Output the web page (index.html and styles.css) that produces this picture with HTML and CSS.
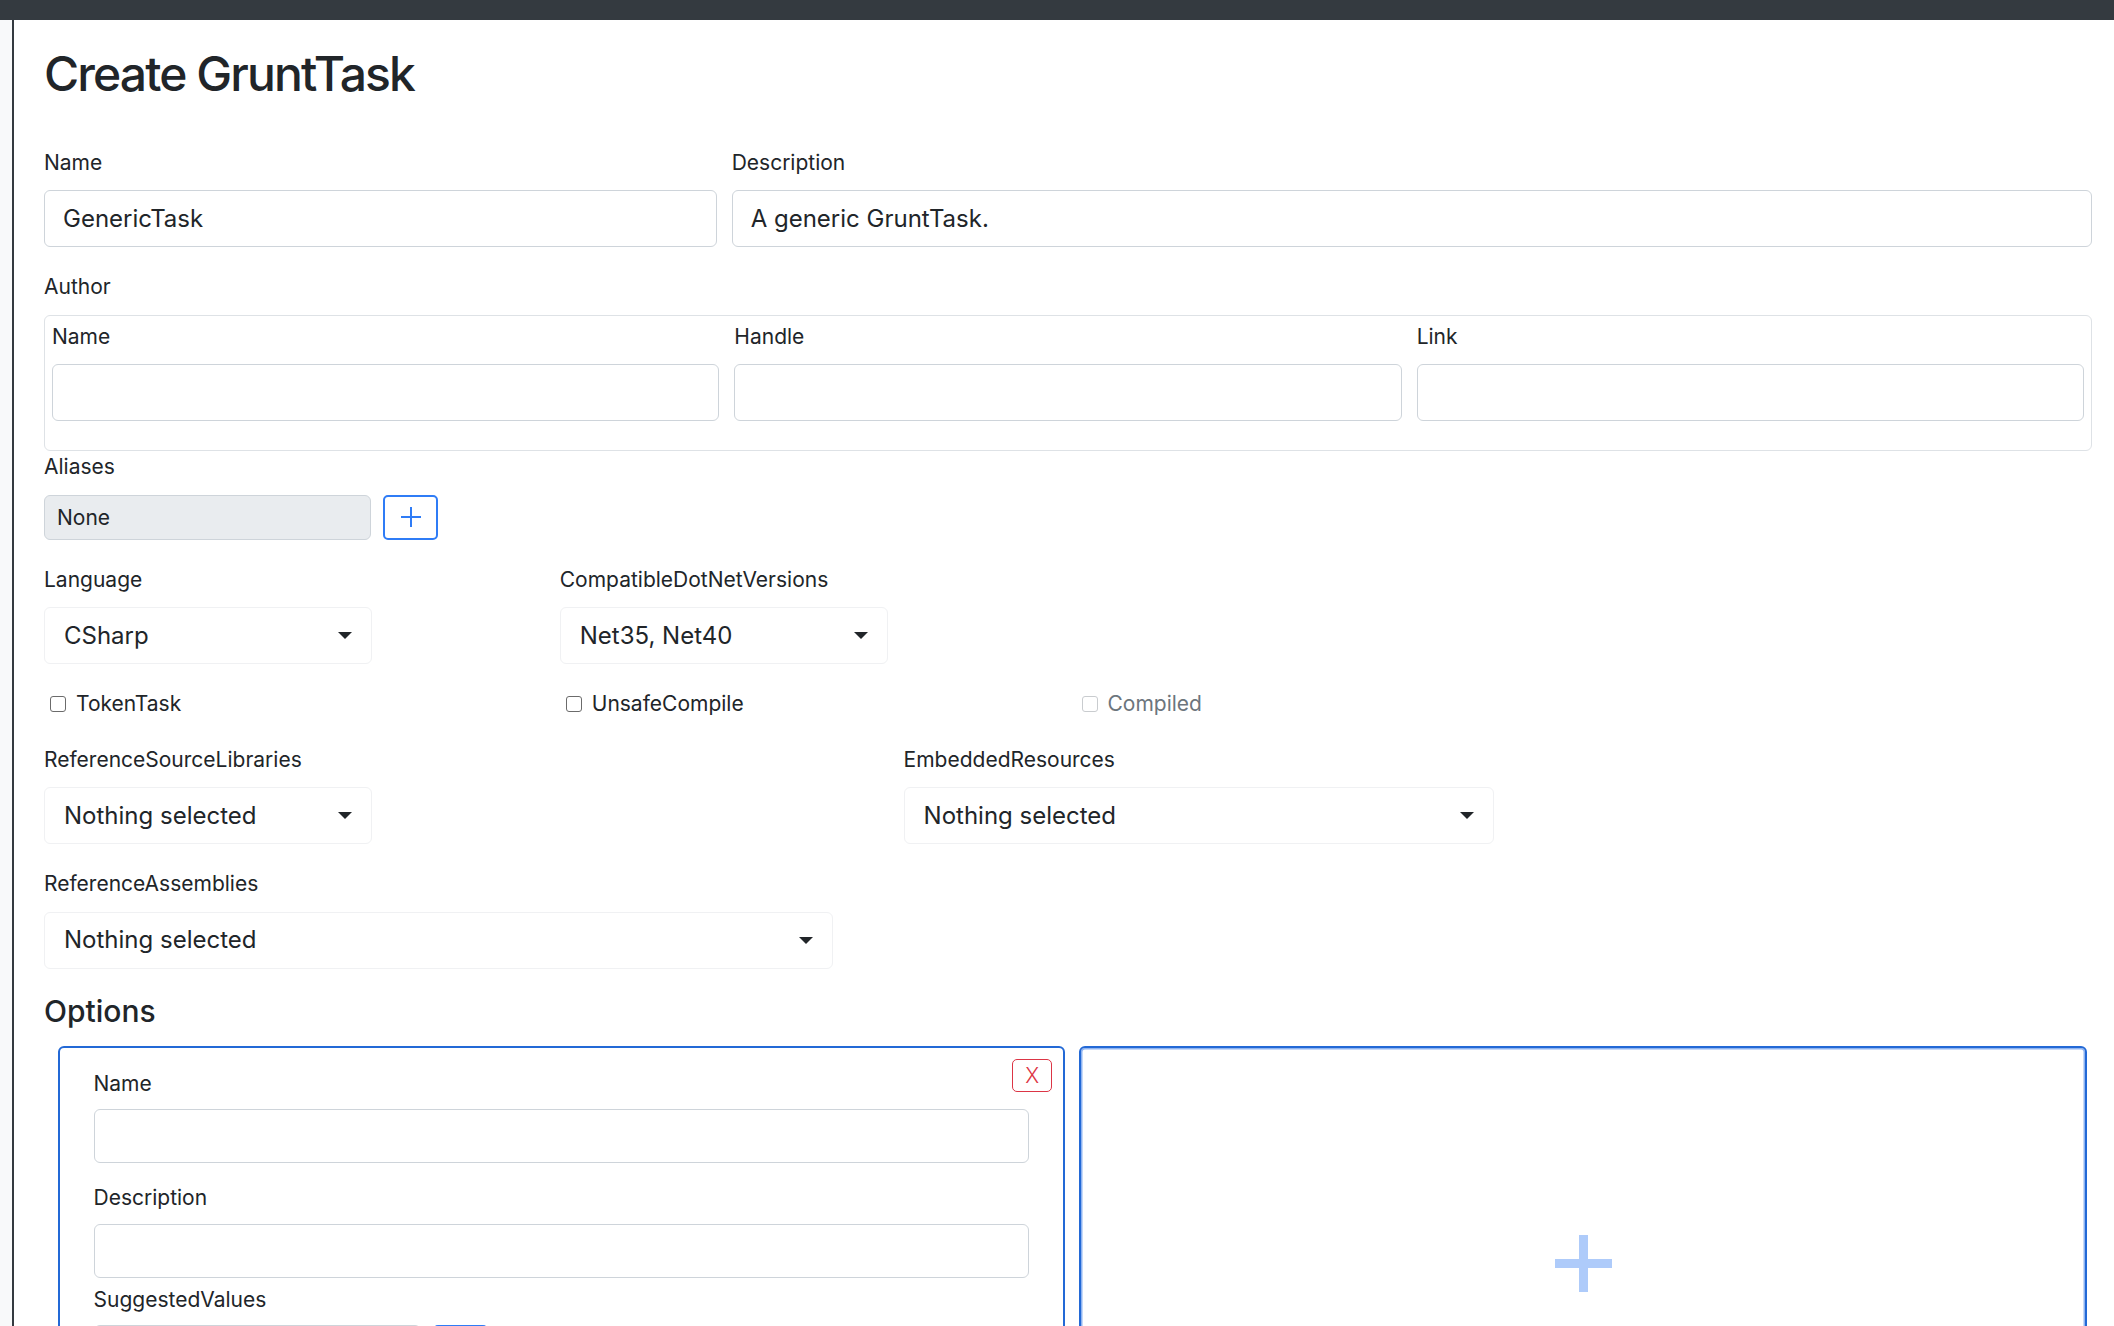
FILE: index.html
```html
<!DOCTYPE html>
<html lang="en">
<head>
	<meta charset="UTF-8">
	<title>Create GruntTask</title>
	<link rel="stylesheet" href="styles.css">
</head>
<body>
	<div class="topbar"></div>
	<div class="layout">
		<aside class="sidebar"></aside>
		<main class="content">
			<h1 class="title">Create GruntTask</h1>
			<form>
				<div class="form-row">
					<div class="form-group col-4">
						<label>Name</label>
						<input class="form-control" type="text" value="GenericTask">
					</div>
					<div class="form-group col-8">
						<label>Description</label>
						<input class="form-control" type="text" value="A generic GruntTask.">
					</div>
				</div>

				<label>Author</label>
				<div class="author">
					<div class="form-row">
						<div class="form-group col-4">
							<label>Name</label>
							<input class="form-control" type="text">
						</div>
						<div class="form-group col-4">
							<label>Handle</label>
							<input class="form-control" type="text">
						</div>
						<div class="form-group col-4">
							<label>Link</label>
							<input class="form-control" type="text">
						</div>
					</div>
				</div>

				<div class="form-group">
					<label>Aliases</label>
					<div class="alias-row">
						<input class="form-control-sm" type="text" value="None" readonly>
						<button type="button" class="btn-add">
							<svg width="22" height="22" viewBox="0 0 22 22"><path d="M11 1v20M1 11h20" stroke="currentColor" stroke-width="2" fill="none"/></svg>
						</button>
					</div>
				</div>

				<div class="form-row">
					<div class="form-group col-3">
						<label>Language</label>
						<button type="button" class="select w-sm"><span>CSharp</span><i class="caret"></i></button>
					</div>
					<div class="form-group col-3">
						<label>CompatibleDotNetVersions</label>
						<button type="button" class="select w-sm"><span>Net35, Net40</span><i class="caret"></i></button>
					</div>
				</div>

				<div class="form-row">
					<div class="form-group col-3">
						<label class="form-check"><input type="checkbox"> TokenTask</label>
					</div>
					<div class="form-group col-3">
						<label class="form-check"><input type="checkbox"> UnsafeCompile</label>
					</div>
					<div class="form-group col-3">
						<label class="form-check disabled"><input type="checkbox" disabled> Compiled</label>
					</div>
				</div>

				<div class="form-row">
					<div class="form-group col-5">
						<label>ReferenceSourceLibraries</label>
						<button type="button" class="select w-sm"><span>Nothing selected</span><i class="caret"></i></button>
					</div>
					<div class="form-group col-7">
						<label>EmbeddedResources</label>
						<button type="button" class="select w-md"><span>Nothing selected</span><i class="caret"></i></button>
					</div>
				</div>

				<div class="form-group">
					<label>ReferenceAssemblies</label>
					<button type="button" class="select w-lg"><span>Nothing selected</span><i class="caret"></i></button>
				</div>

				<h5 class="section">Options</h5>
				<div class="cards">
					<div class="card">
						<button type="button" class="btn-remove">X</button>
						<div class="opt-group">
							<label>Name</label>
							<input class="form-control opt" type="text">
						</div>
						<div class="opt-group last">
							<label>Description</label>
							<input class="form-control opt" type="text">
						</div>
						<div class="opt-group">
							<label>SuggestedValues</label>
							<div class="alias-row">
								<input class="form-control-sm" type="text" value="None" readonly>
								<button type="button" class="btn-add">
									<svg width="22" height="22" viewBox="0 0 22 22"><path d="M11 1v20M1 11h20" stroke="currentColor" stroke-width="2" fill="none"/></svg>
								</button>
							</div>
						</div>
					</div>
					<div class="card card-add">
						<svg width="57" height="57" viewBox="0 0 57 57"><rect x="24" y="0" width="9" height="57" fill="#aecbfa"/><rect x="0" y="24" width="57" height="9" fill="#aecbfa"/></svg>
					</div>
				</div>
			</form>
		</main>
	</div>
</body>
</html>
```

FILE: styles.css
```css
*{
	box-sizing: border-box;
}
body{
	margin: 0;
	font-family: Inter, "Noto Sans", sans-serif;
	font-size: 24px;
	line-height: 1.5;
	color: #212529;
	background: #fff;
}
.topbar{
	height: 20px;
	background: #343a40;
}
.layout{
	display: flex;
	min-height: 1306px;
}
.sidebar{
	flex: none;
	width: 14px;
	background: #f8f9fa;
	border-right: 2px solid #343a40;
}
.content{
	flex: 1;
	padding: 0 22px 0 30px;
}
.title{
	font-size: 48px;
	font-weight: 500;
	line-height: 1.2;
	letter-spacing: -1.9px;
	margin: 25px 0 44px;
}
label{
	display: block;
	font-size: 21px;
	line-height: 31.5px;
	margin-bottom: 12px;
}
.form-group{
	margin-bottom: 24px;
}
.form-row{
	display: flex;
	margin: 0 -7.5px;
}
.form-row > .form-group{
	padding: 0 7.5px;
}
.col-3{ flex: 0 0 25%; }
.col-4{ flex: 0 0 33.3333%; }
.col-5{ flex: 0 0 41.6667%; }
.col-7{ flex: 0 0 58.3333%; }
.col-8{ flex: 0 0 66.6667%; }
.form-control{
	display: block;
	width: 100%;
	height: 57px;
	padding: 9px 18px;
	font: inherit;
	font-size: 24px;
	line-height: 36px;
	color: #212529;
	background: #fff;
	border: 1.5px solid #ced4da;
	border-radius: 6px;
	outline: none;
}
.author{
	border: 1.5px solid #dee2e6;
	border-radius: 6px;
	padding: 5px 7px 5px;
}
.alias-row{
	display: flex;
	align-items: center;
}
.form-control-sm{
	width: 327px;
	height: 45px;
	padding: 5px 12px;
	font: inherit;
	font-size: 21px;
	line-height: 31.5px;
	color: #212529;
	background: #e9ecef;
	border: 1.5px solid #ced4da;
	border-radius: 6px;
	outline: none;
}
.btn-add{
	display: flex;
	align-items: center;
	justify-content: center;
	width: 55px;
	height: 45px;
	margin-left: 12px;
	padding: 0;
	color: #2f7cf6;
	background: #fff;
	border: 2px solid #2f7cf6;
	border-radius: 5px;
}
.select{
	display: flex;
	align-items: center;
	justify-content: space-between;
	height: 57px;
	padding: 0 19px 0 19px;
	font: inherit;
	font-size: 24px;
	color: #212529;
	text-align: left;
	background: #fff;
	border: 1.5px solid #f0f1f3;
	border-radius: 6px;
}
.w-sm{ width: 328px; }
.w-md{ width: 590px; }
.w-lg{ width: 789px; }
.caret{
	width: 0;
	height: 0;
	border-top: 7px solid #212529;
	border-left: 7px solid transparent;
	border-right: 7px solid transparent;
}
.form-check{
	display: flex;
	align-items: center;
	margin: 0;
	padding-left: 6px;
}
.form-check input{
	appearance: none;
	width: 16px;
	height: 16px;
	margin: 0 10px 0 0;
	border: 1.5px solid #6b6b6b;
	border-radius: 3px;
	background: #fff;
}
.form-check.disabled{
	color: #6c757d;
}
.form-check.disabled input{
	border-color: #c9cccf;
}
.section{
	font-size: 30px;
	font-weight: 500;
	line-height: 36px;
	margin: 2px 0 17px;
}
.cards{
	display: grid;
	grid-template-columns: 1fr 1fr;
	align-items: start;
	gap: 14px;
	padding: 0 5px 0 13.5px;
}
.card{
	position: relative;
	min-width: 0;
	border: 2px solid #2369d6;
	border-radius: 6px;
	padding: 20px 34px 24px;
}
.opt-group{
	margin-bottom: 19px;
}
.opt-group.last{
	margin-bottom: 6px;
}
.opt-group label{
	margin-bottom: 10px;
}
.form-control.opt{
	height: 54px;
	padding: 7.5px 18px;
}
.btn-remove{
	position: absolute;
	top: 11px;
	right: 11px;
	width: 40px;
	height: 33px;
	padding: 0;
	font-family: Inter, sans-serif;
	font-size: 21px;
	font-weight: 300;
	line-height: 1;
	color: #dc3545;
	background: #fff;
	border: 1.5px solid #dc3545;
	border-radius: 5px;
}
.card-add{
	display: flex;
	align-items: center;
	justify-content: center;
	height: 436px;
	padding: 0;
	box-shadow: inset 0 0 0 1.5px #8fb4f1;
}
```
